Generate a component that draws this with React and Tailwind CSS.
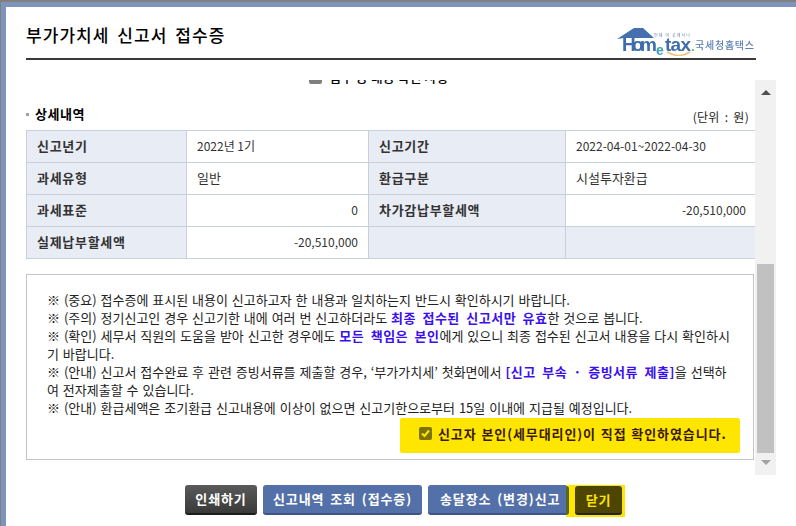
import React from "react";

const font = { fontFamily: '"Noto Sans CJK KR", "Liberation Sans", sans-serif' };

function Logo() {
  return (
    <svg width="142" height="32" viewBox="0 -3 142 32" className="blur-[0.4px]">
      <path d="M19 1 L28 1 L39 11 L9 11 L2 12 Z" fill="#4470b0" />
      <text x="7" y="24" fontSize="19" fontWeight="700" fill="#3f6cab" fontFamily="Liberation Sans" textLength="35">Hom</text>
      <text x="41" y="28" fontSize="14" fontWeight="700" fill="#3aa0b8" fontFamily="Liberation Sans">e</text>
      <text x="50" y="24" fontSize="19" fontWeight="700" fill="#3f6cab" fontFamily="Liberation Sans" textLength="26">tax</text>
      <circle cx="78" cy="23" r="1" fill="#5aa83c" />
      <path d="M52 25 Q64 32 75 25" stroke="#efc27a" strokeWidth="1.5" fill="none" />
      <text x="39" y="10" fontSize="4" fill="#7088b0" fontFamily="Noto Sans CJK KR" textLength="36">언제 어 곳에서나</text>
      <text x="80" y="22" fontSize="10" fontWeight="500" fill="#5d7fb5" fontFamily="Noto Sans CJK KR" textLength="59">국세청홈택스</text>
    </svg>
  );
}

function Th({ children }) {
  return (
    <th className="h-[32px] border border-[#c8d0dc] bg-[#e8ecf4] px-[10px] pb-[2px] text-left text-[13px] font-bold tracking-[0.7px] text-[#333]">
      {children}
    </th>
  );
}

function Td({ children, right, ko }) {
  return (
    <td className={`h-[32px] border border-[#c8d0dc] px-[10px] pb-[2px] text-[#333] ${ko ? "text-[13px]" : "text-[12px]"} ${right ? "text-right" : "text-left"}`}>
      {children}
    </td>
  );
}

function B({ children }) {
  return <b className="font-bold tracking-[0.5px] [word-spacing:3px] text-[#3a10f0]">{children}</b>;
}

function App() {
  return (
    <div style={font} className="flex h-[526px] w-[796px] flex-col overflow-hidden border-t-2 border-l border-[#808080] bg-[#7f94bd] pt-[5px] pl-[5px]">
      <div className="flex flex-1 flex-col bg-white pl-[20px]">
        <div className="mr-[40px] flex h-[53px] items-end justify-between border-b-2 border-[#3a3a3a] pb-[6px]">
          <h1 className="mb-[5px] text-[17px] leading-[24px] font-medium tracking-[1.05px] [word-spacing:3px] text-black">부가가치세 신고서 접수증</h1>
          <div className="-mb-[4px] mr-[-1px]">
            <Logo />
          </div>
        </div>

        <div className="mt-[20px] flex h-[395px]">
          <div className="w-[729px] overflow-hidden">
            <div className="h-[4px] overflow-hidden pl-[283px]">
              <span className="-mt-[10px] flex items-center gap-[7px] text-[13px] leading-[14px] font-medium">
                <span className="h-[13px] w-[13px] rounded-[2px] bg-[#7f7f7f]" />
                접수 증 내용 확인 사항
              </span>
            </div>

            <div className="mt-[20px] flex h-[26px] items-start justify-between">
              <h2 className="flex items-center gap-[6px] text-[13px] leading-[20px] font-bold tracking-[0.5px] text-black">
                <span className="h-[3px] w-[3px] bg-[#a0a0a0]" />
                상세내역
              </h2>
              <span className="mt-[3px] mr-[6px] text-[12px] leading-[20px] tracking-[0.3px] [word-spacing:2px] text-[#222]">(단위 : 원)</span>
            </div>

            <table className="w-[730px] table-fixed border-collapse border-t border-t-black">
              <colgroup>
                <col className="w-[160px]" />
                <col className="w-[182px]" />
                <col className="w-[197px]" />
                <col className="w-[191px]" />
              </colgroup>
              <tbody>
                <tr>
                  <Th>신고년기</Th>
                  <Td>2022년 1기</Td>
                  <Th>신고기간</Th>
                  <Td>2022-04-01~2022-04-30</Td>
                </tr>
                <tr>
                  <Th>과세유형</Th>
                  <Td ko>일반</Td>
                  <Th>환급구분</Th>
                  <Td ko>시설투자환급</Td>
                </tr>
                <tr>
                  <Th>과세표준</Th>
                  <Td right>0</Td>
                  <Th>차가감납부할세액</Th>
                  <Td right>-20,510,000</Td>
                </tr>
                <tr>
                  <Th>실제납부할세액</Th>
                  <Td right>-20,510,000</Td>
                  <Th />
                  <td className="border border-[#c8d0dc] bg-[#e8ecf4]" />
                </tr>
              </tbody>
            </table>

            <div className="mt-[15px] h-[186px] w-[728px] border border-[#c4c4c4] px-[20px] pt-[16px] text-[13px] leading-[18px] [word-spacing:1px] whitespace-nowrap text-[#222]">
              <p>※ (중요) 접수증에 표시된 내용이 신고하고자 한 내용과 일치하는지 반드시 확인하시기 바랍니다.</p>
              <p>※ (주의) 정기신고인 경우 신고기한 내에 여러 번 신고하더라도 <B>최종 접수된 신고서만 유효</B>한 것으로 봅니다.</p>
              <p>※ (확인) 세무서 직원의 도움을 받아 신고한 경우에도 <B>모든 책임은 본인</B>에게 있으니 최종 접수된 신고서 내용을 다시 확인하시<br />기 바랍니다.</p>
              <p>※ (안내) 신고서 접수완료 후 관련 증빙서류를 제출할 경우, ‘부가가치세’ 첫화면에서 <B>[신고 부속 · 증빙서류 제출]</B>을 선택하<br />여 전자제출할 수 있습니다.</p>
              <p>※ (안내) 환급세액은 조기환급 신고내용에 이상이 없으면 신고기한으로부터 15일 이내에 지급될 예정입니다.</p>
              <div className="mt-[1px] mr-[-7px] flex justify-end">
                <label className="flex h-[35px] w-[340px] items-center rounded-[2px] bg-[#ffe600] pb-[4px] pl-[19px] text-[13px] font-bold tracking-[0.9px] text-[#3a1a00]">
                  <span className="mr-[6px] flex h-[13px] w-[13px] items-center justify-center rounded-[2px] bg-[#7d7400]">
                    <svg width="11" height="11" viewBox="0 0 11 11">
                      <path d="M2 5.5 L4.5 8 L9 2.5" stroke="#ffe600" strokeWidth="2" fill="none" />
                    </svg>
                  </span>
                  신고자 본인(세무대리인)이 직접 확인하였습니다.
                </label>
              </div>
            </div>
          </div>

          <div className="flex h-[395px] w-[21px] flex-col items-center bg-[#f1f1f1]">
            <div className="mt-[10px] h-0 w-0 border-x-[5px] border-b-[5px] border-x-transparent border-b-[#505050]" />
            <div className="mt-[169px] h-[189px] w-[17px] bg-[#c1c1c1]" />
            <div className="mt-[7px] h-0 w-0 border-x-[5px] border-t-[5px] border-x-transparent border-t-[#a3a3a3]" />
          </div>
        </div>

        <div className="mt-[10px] flex items-start pl-[159px] text-[13px] font-bold tracking-[0.9px]">
          <button className="h-[30px] w-[72px] rounded-[3px] border-b-2 border-[#1c1c1c] bg-gradient-to-b from-[#5a5a5a] to-[#3a3a3a] text-white">인쇄하기</button>
          <button className="ml-[6px] h-[30px] w-[159px] rounded-[3px] border-b-2 border-[#3c5488] bg-[#5470a8] [word-spacing:2px] text-white">신고내역 조회 (접수증)</button>
          <button className="ml-[6px] flex h-[30px] w-[138px] items-center rounded-l-[3px] border-b-2 border-[#3c5488] bg-[#5470a8] pl-[12px] [word-spacing:2px] text-white">송달장소 (변경)신고</button>
          <div className="flex h-[32px] w-[59px] items-start bg-[#ffe600] pt-[1px]">
            <span className="h-[29px] w-[3px] rounded-r-[3px] bg-[#55662a]" />
            <button className="ml-[6px] h-[29px] w-[47px] rounded-[3px] border-b-2 border-[#222] bg-[#4d4500] text-[#ffe600]">닫기</button>
          </div>
        </div>
      </div>
    </div>
  );
}

export default App;
